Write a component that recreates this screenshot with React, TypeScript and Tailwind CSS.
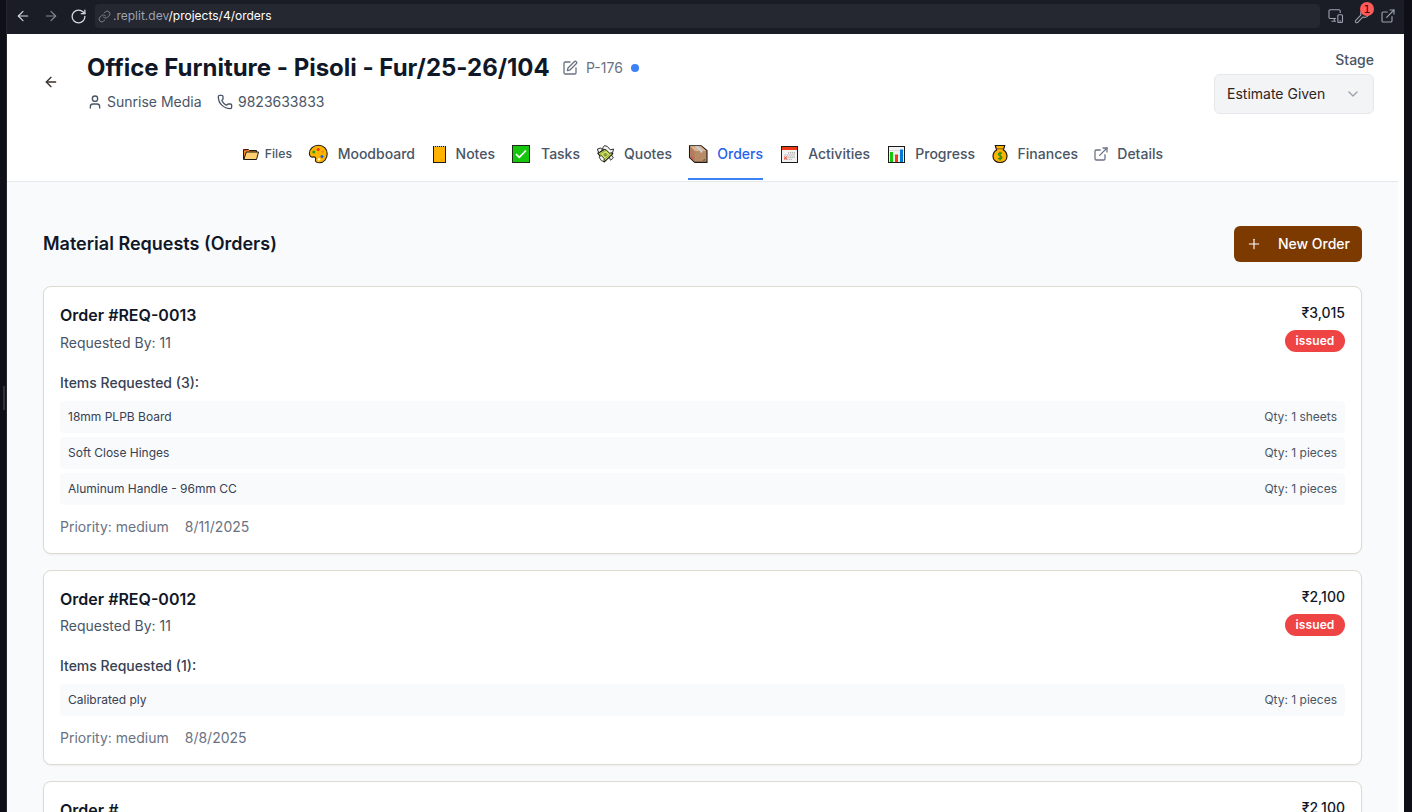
import React from 'react';
import { ArrowLeft, ArrowRight, RotateCw, Link, Wrench, ExternalLink, User, Phone, SquarePen, ChevronDown, Plus } from 'lucide-react';

const DevicesIcon = () => (
  <svg width="16" height="16" viewBox="0 0 16 16" fill="none" stroke="currentColor" strokeWidth="1.1">
    <path d="M8 10.5H2.2C1.5 10.5 1 10 1 9.3V3C1 2.3 1.5 1.8 2.2 1.8H11C11.7 1.8 12.2 2.3 12.2 3V5M3.5 13.3H8M6.3 10.5V13.3" />
    <rect x="9.8" y="6.8" width="4.7" height="7.6" rx="1" />
    <path d="M11.5 12.8H12.8" />
  </svg>
);
const FolderIcon = () => (
  <svg width="18" height="20" viewBox="0 0 18 20">
    <path d="M1.5 15.5V5.5H6.5L7.5 6.5H14.5V8.5" fill="#f28a1c" stroke="#1c1a17" strokeWidth="1" />
    <path d="M1.8 15.5L4.3 8H16.5L14.5 15.5Z" fill="#ffcf70" stroke="#1c1a17" strokeWidth="1" />
    <path d="M2 6.3H5" stroke="#e8412a" strokeWidth="1" />
  </svg>
);
const PaletteIcon = () => (
  <svg width="20" height="20" viewBox="0 0 20 20">
    <path d="M10.5 1.2C15.5 1.2 19.2 5 19.2 9.8C19.2 15 15.8 18.8 11.5 18.8C8.2 18.8 6.9 17.3 7.6 15.3C8 13.8 6.8 12.6 5.2 13C3 13.5 1.4 12 1.4 9.6C1.4 5 5.3 1.2 10.5 1.2Z" fill="#ffb300" stroke="#1c1a17" strokeWidth="1.1" />
    <circle cx="5.8" cy="8" r="1.5" fill="#16a71f" />
    <circle cx="10.2" cy="5.4" r="1.5" fill="#f03a17" />
    <circle cx="14.7" cy="7.6" r="1.2" fill="#e78a20" />
    <circle cx="14" cy="12.6" r="1.5" fill="#1465d8" />
    <circle cx="11" cy="15.4" r="1.3" fill="#fff3c7" />
  </svg>
);
const NotebookIcon = () => (
  <svg width="16" height="20" viewBox="0 0 16 20">
    <rect x="2.5" y="2.5" width="12" height="16" fill="#ffb300" stroke="#1c1a17" />
    <path d="M3 2.5H14" stroke="#b9b9b4" strokeDasharray="1 1" />
    <path d="M9.5 16h3" stroke="#ee9d00" />
  </svg>
);
const CheckIcon = () => (
  <svg width="20" height="20" viewBox="0 0 20 20">
    <rect x="1.5" y="1.5" width="17" height="17" fill="#16c60c" stroke="#1c2a18" strokeWidth="1" />
    <path d="M5 10.2L8.3 13.3L15 6.5" fill="none" stroke="#fff" strokeWidth="1.7" />
  </svg>
);
const MoneyIcon = () => (
  <svg width="20" height="20" viewBox="0 0 20 20">
    <path d="M1.8 9.2L10.6 4.2L16.8 9.8L8.3 18Z" fill="#cfe05c" stroke="#1c1a17" strokeWidth="1.1" />
    <path d="M4.2 9.8L10.2 6.3L14.3 10.1L8.3 15.6Z" fill="none" stroke="#86993a" strokeWidth=".8" />
    <ellipse cx="9.4" cy="10.7" rx="2" ry="1.8" fill="#86993a" />
    <path d="M6 4.8L8.5 1.6L11.3 2.4L14.3 5.8L17.6 5L16.6 8.6L13.6 9.2L10 5.8Z" fill="#f4f4f2" stroke="#1c1a17" strokeWidth=".9" />
    <path d="M1.5 5L4.8 4L6.4 6L3.6 8.3L2 7.5Z" fill="#f4f4f2" stroke="#1c1a17" strokeWidth=".9" />
    <path d="M3 13L5.2 11.6L8.3 14.6L7.8 17.6L5.3 16.6Z M13.2 12.8L16 11.4L17.3 14L14.5 16.2Z" fill="#f4f4f2" stroke="#1c1a17" strokeWidth=".8" />
  </svg>
);
const PackageIcon = () => (
  <svg width="20" height="20" viewBox="0 0 20 20">
    <path d="M1.5 1.8H13.2L19 6.6V18.4H6.8L1.5 13.5Z" fill="#b88b66" stroke="#1c1a17" strokeWidth="1.1" />
    <path d="M2 2.3H13L18.4 6.9H7Z" fill="#d8b596" />
    <path d="M2 3L6.8 7.2V17.8L2 13.2Z" fill="#b07e5c" />
    <path d="M7 2.3H10L14.5 6.9V8.6H12.3V6.9Z" fill="#cbd3d5" />
    <path d="M3.2 12L5.5 14.2V15.6L3.2 13.6Z" fill="#ef3652" />
    <path d="M14.5 16.5L16.8 15V16.5Z" fill="#4b3b2f" />
  </svg>
);
const CalendarIcon = () => (
  <svg width="20" height="20" viewBox="0 0 20 20">
    <rect x="2.5" y="2.5" width="16" height="16" fill="#f2f2f2" stroke="#1c1a17" strokeWidth="1" />
    <path d="M3 3H18V6H3Z" fill="#f03a17" />
    <path d="M9 8.9H16M5.5 11H16M8.5 13.1H16M5.5 15.2H13.5" stroke="#a6a6a6" strokeWidth="1.1" strokeDasharray="1.3 .7" />
    <path d="M5 12.5L8 15.3M8 12.5L5 15.3" stroke="#f03a17" strokeWidth="1" />
  </svg>
);
const ChartIcon = () => (
  <svg width="20" height="20" viewBox="0 0 20 20">
    <rect x="2.5" y="2.5" width="16" height="16" fill="#f2f2f2" stroke="#1c1a17" strokeWidth="1" />
    <path d="M3 6.5H18M3 11.5H18" stroke="#dddddd" />
    <path d="M4 8H7V18H4Z" fill="#16c60c" />
    <path d="M9 10.5H12V18H9Z" fill="#f03a17" />
    <path d="M14 5.5H17V18H14Z" fill="#0078d7" />
  </svg>
);
const BagIcon = () => (
  <svg width="18" height="20" viewBox="0 0 18 20">
    <path d="M4.3 1.5H13.7L12.4 6C14.6 7.3 16 9.7 16 12.2C16 16 13 18.5 9 18.5C5 18.5 2 16 2 12.2C2 9.7 3.4 7.3 5.6 6Z" fill="#ffb300" stroke="#1c1a17" strokeWidth="1.2" />
    <path d="M5.4 4.8H12.6" stroke="#6b4c08" strokeWidth=".8" />
    <path d="M11 9.5C9.3 8.2 7.2 8.9 7.4 10.5C7.7 12 10.9 11.8 10.9 13.6C10.9 15 8.6 15.4 7 14.2M9.1 7.8V16.4" fill="none" stroke="#188a12" strokeWidth="1.1" />
  </svg>
);

type Tab = { label: string; icon: React.ReactNode; cls: string };
const tabs: Tab[] = [
  { label: 'Files', icon: <FolderIcon />, cls: 'w-[50px] text-[12.25px] text-gray-600' },
  { label: 'Moodboard', icon: <PaletteIcon />, cls: 'w-[107px] text-sm text-gray-600' },
  { label: 'Notes', icon: <NotebookIcon />, cls: 'w-16 text-sm text-gray-600' },
  { label: 'Tasks', icon: <CheckIcon />, cls: 'w-[69px] text-sm text-gray-600' },
  { label: 'Quotes', icon: <MoneyIcon />, cls: 'w-[76px] text-sm text-gray-600' },
  { label: 'Orders', icon: <PackageIcon />, cls: 'w-[75px] border-b-2 border-[#3b82f6] text-sm text-[#2563eb]' },
  { label: 'Activities', icon: <CalendarIcon />, cls: 'w-[91px] text-sm text-gray-600' },
  { label: 'Progress', icon: <ChartIcon />, cls: 'w-[89px] text-sm text-gray-600' },
  { label: 'Finances', icon: <BagIcon />, cls: 'w-[87px] text-sm text-gray-600' },
  { label: 'Details', icon: <ExternalLink size={16} strokeWidth={1.9} className="-ml-px text-gray-500" />, cls: 'w-[69px] text-sm text-gray-600' },
];

type Item = { name: string; qty: string };
type Order = { title: string; amount: string; date: string; items: Item[]; cls: string; gap: string };
const orders: Order[] = [
  {
    title: 'Order #REQ-0013', amount: '₹3,015', date: '8/11/2025', cls: 'h-[268px]', gap: 'mt-1',
    items: [
      { name: '18mm PLPB Board', qty: 'Qty: 1 sheets' },
      { name: 'Soft Close Hinges', qty: 'Qty: 1 pieces' },
      { name: 'Aluminum Handle - 96mm CC', qty: 'Qty: 1 pieces' },
    ],
  },
  { title: 'Order #REQ-0012', amount: '₹2,100', date: '8/8/2025', cls: 'h-[195px]', gap: 'mt-[3px]', items: [{ name: 'Calibrated ply', qty: 'Qty: 1 pieces' }] },
  { title: 'Order #', amount: '₹2,100', date: '', cls: 'h-[195px]', gap: 'mt-1', items: [] },
];

function OrderCard({ order }: { order: Order }) {
  return (
    <article className={`shrink-0 rounded-lg border border-[#dddad0] bg-white px-4 pt-4 shadow-xs ${order.cls}`}>
      <div className="flex h-[68px] justify-between">
        <div>
          <h3 className="text-base leading-6 font-semibold text-gray-900">{order.title}</h3>
          {order.items.length > 0 && <p className={`pt-[2px] text-sm leading-5 text-gray-600 ${order.gap}`}>Requested By: 11</p>}
        </div>
        <div className="flex flex-col items-end">
          <span className="text-sm leading-5 font-medium text-gray-900">{order.amount}</span>
          {order.items.length > 0 && (
            <span className="mt-[7px] flex h-[22px] w-[60px] items-center justify-center rounded-full bg-[#ef4444] text-xs font-semibold tracking-[0.1px] text-white">issued</span>
          )}
        </div>
      </div>
      {order.items.length > 0 && (
        <>
          <h4 className={`text-sm leading-5 font-medium text-gray-700 ${order.gap === 'mt-1' ? 'mt-[2px]' : 'mt-px'}`}>Items Requested ({order.items.length}):</h4>
          <div className="mt-2 flex flex-col gap-1">
            {order.items.map((item) => (
              <div key={item.name} className="flex h-8 items-center justify-between rounded bg-gray-50 px-2 text-xs text-gray-700">
                <span>{item.name}</span>
                <span className="text-gray-600">{item.qty}</span>
              </div>
            ))}
          </div>
          <div className="mt-3 flex gap-4 text-sm leading-5 text-gray-500">
            <span>Priority: medium</span>
            <span>{order.date}</span>
          </div>
        </>
      )}
    </article>
  );
}

export default function App() {
  return (
    <div className="flex h-[812px] w-[1412px] flex-col overflow-hidden bg-[#0e0f17] font-['Inter','Liberation_Sans',sans-serif] antialiased">
      <div className="flex h-[34px] shrink-0">
        <div className="flex w-[7px] border-r border-[#242630]" />
        <div className="flex w-[1397px] items-center bg-[#1b1d26] pb-[2px] text-[#9da2b0]">
          <div className="flex w-[88px] items-center pl-2">
            <ArrowLeft size={16} strokeWidth={1.7} className="text-[#d7dae2]" />
            <ArrowRight size={16} strokeWidth={1.7} className="ml-3 text-[#858a98]" />
            <RotateCw size={17} strokeWidth={1.8} className="ml-[11px] text-[#d7dae2]" />
          </div>
          <div className="flex h-6 w-[1225px] items-center rounded bg-[#252731] pl-[3px] text-xs text-white">
            <Link size={13} strokeWidth={1.7} className="text-[#858a98]" />
            <span className="ml-[2px]"><span className="text-[#9da2b0]">.replit.dev</span>/projects/4/orders</span>
          </div>
          <div className="relative flex grow items-center gap-[10px] pl-2">
            <DevicesIcon />
            <Wrench size={16} strokeWidth={1.6} />
            <ExternalLink size={16} strokeWidth={1.7} />
            <span className="absolute -top-[6px] left-[40px] flex size-[14px] items-center justify-center rounded-full bg-[#ff5b5b] font-['DejaVu_Sans',sans-serif] text-[11px] leading-none text-[#3d0808]">1</span>
          </div>
        </div>
      </div>

      <div className="flex h-[778px]">
        <div className="flex w-[7px] shrink-0 items-start border-r border-[#242630] pt-[352px] pl-[3px]">
          <div className="h-6 w-[2px] bg-[#303340]" />
        </div>
        <div className="flex w-[1397px] bg-white">
          <div className="flex w-[1391px] flex-col overflow-hidden">
            <header className="h-[148px] shrink-0 border-b border-gray-200 bg-white">
              <div className="flex h-[94px]">
                <div className="w-20 pt-10 pl-9"><ArrowLeft size={16} className="text-[#3b2f2a]" /></div>
                <div className="grow pt-4">
                  <div className="flex h-9 items-center">
                    <h1 className="w-[475px] text-2xl leading-9 font-bold tracking-[-0.01px] whitespace-nowrap text-gray-900">Office Furniture - Pisoli - Fur/25-26/104</h1>
                    <SquarePen size={16} className="text-gray-500" />
                    <span className="ml-2 text-sm text-gray-500">P-176</span>
                    <span className="ml-2 size-2 rounded-full bg-[#3b82f6]" />
                  </div>
                  <div className="mt-[6px] flex h-5 items-center text-sm whitespace-nowrap text-gray-600">
                    <User size={16} /><span className="ml-1 w-[94px]">Sunrise Media</span>
                    <Phone size={16} className="ml-4" /><span className="ml-[5px]">9823633833</span>
                  </div>
                </div>
                <div className="flex w-[184px] shrink-0 flex-col pt-4">
                  <span className="pr-6 text-right text-sm leading-5 font-medium text-gray-600">Stage</span>
                  <div className="mt-1 flex h-10 w-40 items-center justify-between rounded-md border border-gray-200 bg-gray-100 px-3 text-sm text-[#30231b]">
                    Estimate Given <ChevronDown size={16} className="text-gray-400" />
                  </div>
                </div>
              </div>
              <nav className="flex h-[52px] gap-4 pl-[235px]">
                {tabs.map((tab) => (
                  <div key={tab.label} className={`flex shrink-0 items-start justify-between font-medium ${tab.cls}`}>
                    <span className="flex h-[52px] items-center">{tab.icon}</span>
                    <span className="flex h-[52px] items-center whitespace-nowrap">{tab.label}</span>
                  </div>
                ))}
              </nav>
            </header>
            <main className="flex h-[630px] flex-col bg-[#f8fafc] pr-9 pl-9">
              <div className="mt-11 flex h-9 shrink-0 items-center justify-between">
                <h2 className="text-lg font-semibold text-gray-900">Material Requests (Orders)</h2>
                <button className="flex h-9 w-32 items-center justify-between rounded-md bg-[#7c3a00] px-3 text-sm font-medium text-white">
                  <Plus size={16} strokeWidth={1.7} /> New Order
                </button>
              </div>
              <div className="mt-6 flex flex-col gap-4">
                {orders.map((order) => <OrderCard key={order.title} order={order} />)}
              </div>
            </main>
          </div>
        </div>
      </div>
    </div>
  );
}
